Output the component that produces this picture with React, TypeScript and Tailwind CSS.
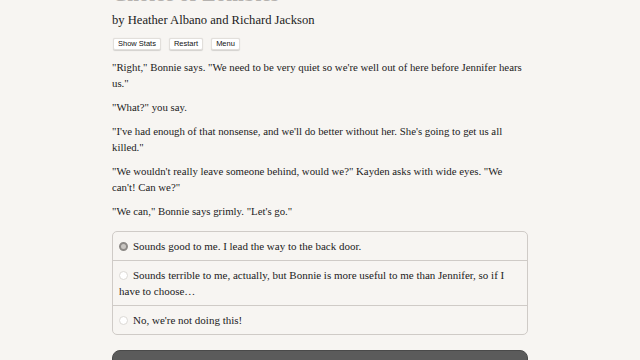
import React from "react";

const PARAGRAPHS = [
  "\"Right,\" Bonnie says. \"We need to be very quiet so we're well out of here before Jennifer hears us.\"",
  "\"What?\" you say.",
  "\"I've had enough of that nonsense, and we'll do better without her. She's going to get us all killed.\"",
  "\"We wouldn't really leave someone behind, would we?\" Kayden asks with wide eyes. \"We can't! Can we?\"",
  "\"We can,\" Bonnie says grimly. \"Let's go.\"",
];

const CHOICES = [
  "Sounds good to me. I lead the way to the back door.",
  "Sounds terrible to me, actually, but Bonnie is more useful to me than Jennifer, so if I have to choose…",
  "No, we're not doing this!",
];

export default function App() {
  const selected = 0;

  return (
    <div
      className="min-h-screen w-full overflow-hidden bg-[#f7f5f2] text-[#222]"
      style={{ fontFamily: '"Liberation Serif", "DejaVu Serif", serif' }}
    >
      <div className="mx-auto w-[416px]">
        {/* Title, scrolled mostly out of view */}
        <h1 className="-mt-[18px] text-[21px] font-bold leading-[24px] text-[#b5b2af]">
          Choice of Zombies
        </h1>
        <h2 className="mt-[5px] text-[12.6px] leading-[18px] text-[#1c1c1c]">
          by Heather Albano and Richard Jackson
        </h2>

        {/* Toolbar */}
        <div
          className="mt-[9px] flex gap-[8px] pl-[1px]"
          style={{ fontFamily: '"Liberation Sans", Arial, sans-serif' }}
        >
          {["Show Stats", "Restart", "Menu"].map((label) => (
            <button
              key={label}
              className="h-[12px] rounded-[2px] border border-[#e2dfdb] bg-white px-[4px] text-[7.5px] leading-[10px] text-[#111] shadow-[0_0.5px_1px_rgba(0,0,0,0.15)]"
            >
              {label}
            </button>
          ))}
        </div>

        {/* Story text */}
        <div className="mt-[9px] space-y-[8px] text-[10.8px] leading-[16px]">
          {PARAGRAPHS.map((p, i) => (
            <p key={i}>{p}</p>
          ))}
        </div>

        {/* Choices */}
        <div className="mt-[12px] overflow-hidden rounded-[5px] border border-[#cfcbc7]">
          {CHOICES.map((c, i) => (
            <div
              key={i}
              className={`px-[6px] py-[6px] text-[11px] leading-[16px] ${i > 0 ? "border-t border-[#cfcbc7]" : ""}`}
            >
              <span
                className={`mr-[5px] inline-block h-[9px] w-[9px] rounded-full align-[-1px] ${
                  i === selected
                    ? "border-[2.5px] border-[#8d8a87] bg-[#c9c6c2]"
                    : "border border-[#dcd9d5] bg-white"
                }`}
              />
              {c}
            </div>
          ))}
        </div>

        {/* Next button */}
        <div className="mt-[15px] h-[20px] rounded-t-[8px] border border-[#4a4a4a] bg-[#5b5b5b]" />
      </div>
    </div>
  );
}
